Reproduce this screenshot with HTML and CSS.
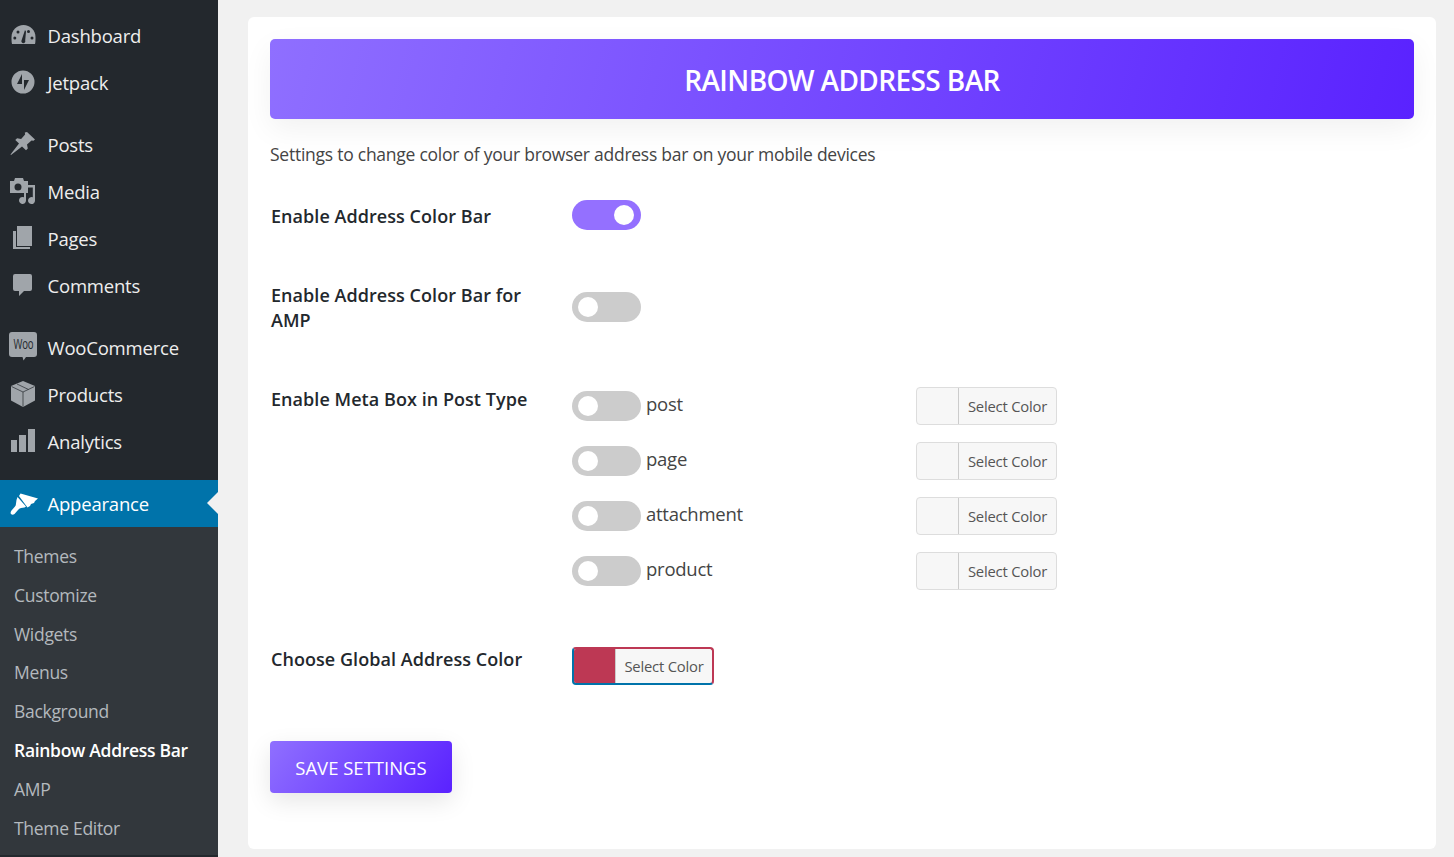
FILE: index.html
```html
<!DOCTYPE html>
<html>
  <head>
    <title>Rainbow Address Bar</title>
    <link rel="stylesheet" href="styles.css">
  </head>
  <body>
    <div class="layout">
      <nav class="sidebar">
        <ul class="menu">
          <li class="menu-item">
            <svg class="icon" viewBox="0 0 26 26"><path d="M2 22C1.500 20 1.500 18 1.500 15 1.500 8 7 3 13.500 3S25.500 8 25.500 15c0 3 0 5-.5 7z"/><g class="cut"><circle cx="4.800" cy="16" r="1.500"/><circle cx="8" cy="10" r="1.500"/><circle cx="18.500" cy="9.500" r="1.500"/><circle cx="22" cy="16" r="1.500"/><path d="M11.500 18.500L15 8l1 1.500-.8 9a2 2 0 1 1-3.700 0z"/></g></svg>
            <span>Dashboard</span>
          </li>
          <li class="menu-item">
            <svg class="icon" viewBox="0 0 26 26"><path fill-rule="evenodd" d="M13 1.500a11.500 11.500 0 1 0 0 23 11.500 11.500 0 0 0 0-23zM12 5v10H7zM14 21V11h5z"/></svg>
            <span>Jetpack</span>
          </li>
          <li class="menu-item gap">
            <svg class="icon" viewBox="0 0 26 26"><path d="M17 1l8 7.500-1.500 1.300-2-.3-4.500 4 .8 4-1.800 1.800-4-3.800L1 24l-.5-.5L9 12.500 5.300 9l1.800-1.800 4 .7 4-4.500-.3-2z"/></svg>
            <span>Posts</span>
          </li>
          <li class="menu-item">
            <svg class="icon" viewBox="0 0 26 26"><path fill-rule="evenodd" d="M0 3h4l1-3h8l1 3h4v12H0zM8 5.500a3.500 3.500 0 1 0 0 7 3.500 3.500 0 0 0 0-7z"/><path d="M14 7h11v15.500a3.500 3.500 0 1 1-2.200-3.200V9.500h-6.800v13a3.500 3.500 0 1 1-2-3.200z"/></svg>
            <span>Media</span>
          </li>
          <li class="menu-item">
            <svg class="icon" viewBox="0 0 26 26"><path d="M7 1h15v20H7z"/><path d="M3 6h3v16h14v2H3z"/></svg>
            <span>Pages</span>
          </li>
          <li class="menu-item">
            <svg class="icon" viewBox="0 0 26 26"><path d="M5 2h15a2 2 0 0 1 2 2v13a2 2 0 0 1-2 2h-6l-5 5v-5H5a2 2 0 0 1-2-2V4a2 2 0 0 1 2-2z"/></svg>
            <span>Comments</span>
          </li>
          <li class="menu-item gap">
            <svg class="icon icon-woo" viewBox="0 0 28 29"><path d="M3 0h22a3 3 0 0 1 3 3v19a3 3 0 0 1-3 3h-8l-2.500 3.500-1-3.500H3a3 3 0 0 1-3-3V3a3 3 0 0 1 3-3z"/><text class="woo-mark" x="4.500" y="17" textLength="20" lengthAdjust="spacingAndGlyphs">Woo</text></svg>
            <span>WooCommerce</span>
          </li>
          <li class="menu-item">
            <svg class="icon" viewBox="0 0 26 26"><path d="M13 0l12 5v14.500L13 26 1 19.500V5z"/><path class="cut-line" d="M1.500 5.500L13 11l11.500-5.500M13 11v14.500M7 3l11.500 5.500"/></svg>
            <span>Products</span>
          </li>
          <li class="menu-item">
            <svg class="icon" viewBox="0 0 26 26"><path d="M1 12h6v12H1zM9 7h7v17H9zM18 1h7v23h-7z"/></svg>
            <span>Analytics</span>
          </li>
          <li class="menu-item gap current">
            <svg class="icon" viewBox="0 0 26 26"><path d="M10.500 3.500L28 8.500l-3 2.500-1 2-3 1-1 2-2.500 1.500L9 6z"/><path d="M7.500 7l8.500 9.500-1.500 1-3.500.5q-2 .5-3 2l-3.500 4q-2 1.500-3.500 0-1-1.500.5-3.500l3.500-4q1-1 1-3l.5-3.500z"/></svg>
            <span>Appearance</span>
          </li>
        </ul>
        <ul class="submenu">
          <li>Themes</li>
          <li>Customize</li>
          <li>Widgets</li>
          <li>Menus</li>
          <li>Background</li>
          <li class="active">Rainbow Address Bar</li>
          <li>AMP</li>
          <li>Theme Editor</li>
        </ul>
      </nav>

      <main class="content">
        <div class="card">
          <h1 class="banner">RAINBOW ADDRESS BAR</h1>
          <p class="intro">Settings to change color of your browser address bar on your mobile devices</p>

          <div class="row row-first">
            <div class="label">Enable Address Color Bar</div>
            <div class="toggle on"></div>
          </div>

          <div class="row row-amp">
            <div class="label">Enable Address Color Bar for AMP</div>
            <div class="toggle"></div>
          </div>

          <div class="row row-types">
            <div class="label">Enable Meta Box in Post Type</div>
            <div class="types">
              <div class="type">
                <div class="toggle"></div><span class="type-name">post</span>
                <div class="picker"><span class="swatch"></span><span class="picker-text">Select Color</span></div>
              </div>
              <div class="type">
                <div class="toggle"></div><span class="type-name">page</span>
                <div class="picker"><span class="swatch"></span><span class="picker-text">Select Color</span></div>
              </div>
              <div class="type">
                <div class="toggle"></div><span class="type-name">attachment</span>
                <div class="picker"><span class="swatch"></span><span class="picker-text">Select Color</span></div>
              </div>
              <div class="type">
                <div class="toggle"></div><span class="type-name">product</span>
                <div class="picker"><span class="swatch"></span><span class="picker-text">Select Color</span></div>
              </div>
            </div>
          </div>

          <div class="row row-global">
            <div class="label">Choose Global Address Color</div>
            <div class="picker picker-global"><span class="swatch"></span><span class="picker-text">Select Color</span></div>
          </div>

          <button class="save">SAVE SETTINGS</button>
        </div>
      </main>
    </div>
  </body>
</html>
```

FILE: styles.css
```css
html, body {
  margin: 0;
  height: 857px;
  overflow: hidden;
}
body {
  background: #f1f1f1;
  font-family: "Open Sans", "Noto Sans", sans-serif;
  color: #23282d;
}
ul {
  list-style: none;
  margin: 0;
  padding: 0;
}
.layout {
  display: flex;
  height: 857px;
}

/* admin sidebar */
.sidebar {
  width: 218px;
  flex: none;
  background: #23282d;
  padding-top: 12px;
  overflow: hidden;
}
.menu-item {
  display: flex;
  align-items: center;
  height: 47px;
  color: #eee;
  font-size: 18.500px;
  letter-spacing: -.2px;
  position: relative;
}
.menu-item.gap {
  margin-top: 15px;
}
.menu-item .icon {
  width: 26px;
  height: 26px;
  margin: -2px 11.500px 0 10px;
  fill: #a0a5aa;
  flex: none;
  overflow: visible;
}
.menu-item .icon-woo {
  width: 28px;
  height: 29px;
  margin-left: 9px;
  margin-right: 10.500px;
}
.cut {
  fill: #23282d;
}
.cut-line {
  fill: none;
  stroke: #23282d;
  stroke-width: .7;
}
.woo-mark {
  fill: #23282d;
  font-size: 14px;
}
.menu-item.current {
  background: #0073aa;
  color: #fff;
}
.menu-item.current .icon {
  fill: #fff;
}
.menu-item.current::after {
  content: "";
  position: absolute;
  right: 0;
  top: 12px;
  border: 11px solid transparent;
  border-right-color: #f1f1f1;
  border-left-width: 0;
}
.submenu {
  background: #32373c;
  padding: 10px 0 8px;
}
.submenu li {
  height: 38.800px;
  line-height: 38.800px;
  padding-left: 14px;
  color: #b4b9be;
  font-size: 17.500px;
  letter-spacing: -.3px;
  white-space: nowrap;
}
.submenu li.active {
  color: #fff;
  font-weight: 600;
}

/* settings card */
.content {
  flex: 1;
  padding: 17px 18px 8px 30px;
}
.card {
  background: #fff;
  border-radius: 6px;
  height: 832px;
  padding: 22px 22px 0;
  box-sizing: border-box;
}
.banner {
  margin: 0;
  height: 80px;
  line-height: 82px;
  text-align: center;
  border-radius: 5px;
  color: #fff;
  font-size: 28px;
  font-weight: 600;
  letter-spacing: -.6px;
  background: linear-gradient(105deg, #8f6fff, #5a22ff);
  box-shadow: 0 10px 30px rgba(0, 0, 0, .06);
}
.intro {
  margin: 23px 0 0;
  font-size: 17.500px;
  line-height: 24px;
  letter-spacing: -.25px;
  color: #444;
}
.row {
  display: flex;
  align-items: flex-start;
}
.label {
  width: 302px;
  flex: none;
  box-sizing: border-box;
  padding: 0 40px 0 1px;
  font-size: 18px;
  font-weight: 600;
  line-height: 25px;
  letter-spacing: .05px;
  color: #23282d;
}
.row-first {
  margin-top: 34px;
}
.row-first .label {
  padding-top: 4px;
}
.row-amp {
  margin-top: 53px;
}
.row-amp .toggle {
  margin-top: 9px;
}
.row-types {
  margin-top: 54px;
}
.toggle {
  width: 69px;
  height: 30px;
  border-radius: 15px;
  background: #ccc;
  flex: none;
  display: flex;
  align-items: center;
  padding: 0 6px;
  box-sizing: border-box;
}
.toggle::before {
  content: "";
  width: 20px;
  height: 20px;
  border-radius: 50%;
  background: #fff;
}
.toggle.on {
  background: #9470ff;
  justify-content: flex-end;
  padding-right: 7px;
}
.types {
  display: flex;
  flex-direction: column;
  gap: 17px;
}
.type {
  display: flex;
  align-items: center;
  height: 38px;
}
.type-name {
  width: 270px;
  padding-left: 5px;
  font-size: 18.500px;
  letter-spacing: -.25px;
  color: #444;
  position: relative;
  top: -3px;
}
.picker {
  display: flex;
  width: 141px;
  height: 38px;
  box-sizing: border-box;
  border: 1px solid #ddd;
  border-radius: 4px;
  background: #f7f7f7;
  overflow: hidden;
}
.swatch {
  width: 41px;
  flex: none;
  border-right: 1px solid #ccc;
}
.picker-text {
  flex: 1;
  text-align: center;
  line-height: 36px;
  font-size: 14.800px;
  letter-spacing: -.2px;
  color: #555;
}
.row-global {
  margin-top: 57px;
}
.picker-global {
  width: 142px;
  border: 2px solid;
  border-color: #bd3854 #bd3854 #0073aa #0073aa;
}
.picker-global .swatch {
  background: #bd3854;
}
.picker-global .picker-text {
  line-height: 34px;
}
.save {
  display: block;
  margin-top: 56px;
  width: 182px;
  height: 52px;
  border: 0;
  border-radius: 4px;
  color: #fff;
  font-family: inherit;
  font-size: 18.500px;
  letter-spacing: 0;
  background: linear-gradient(125deg, #8f6fff, #5a22ff);
  box-shadow: 0 8px 24px rgba(0, 0, 0, .1);
}
```
